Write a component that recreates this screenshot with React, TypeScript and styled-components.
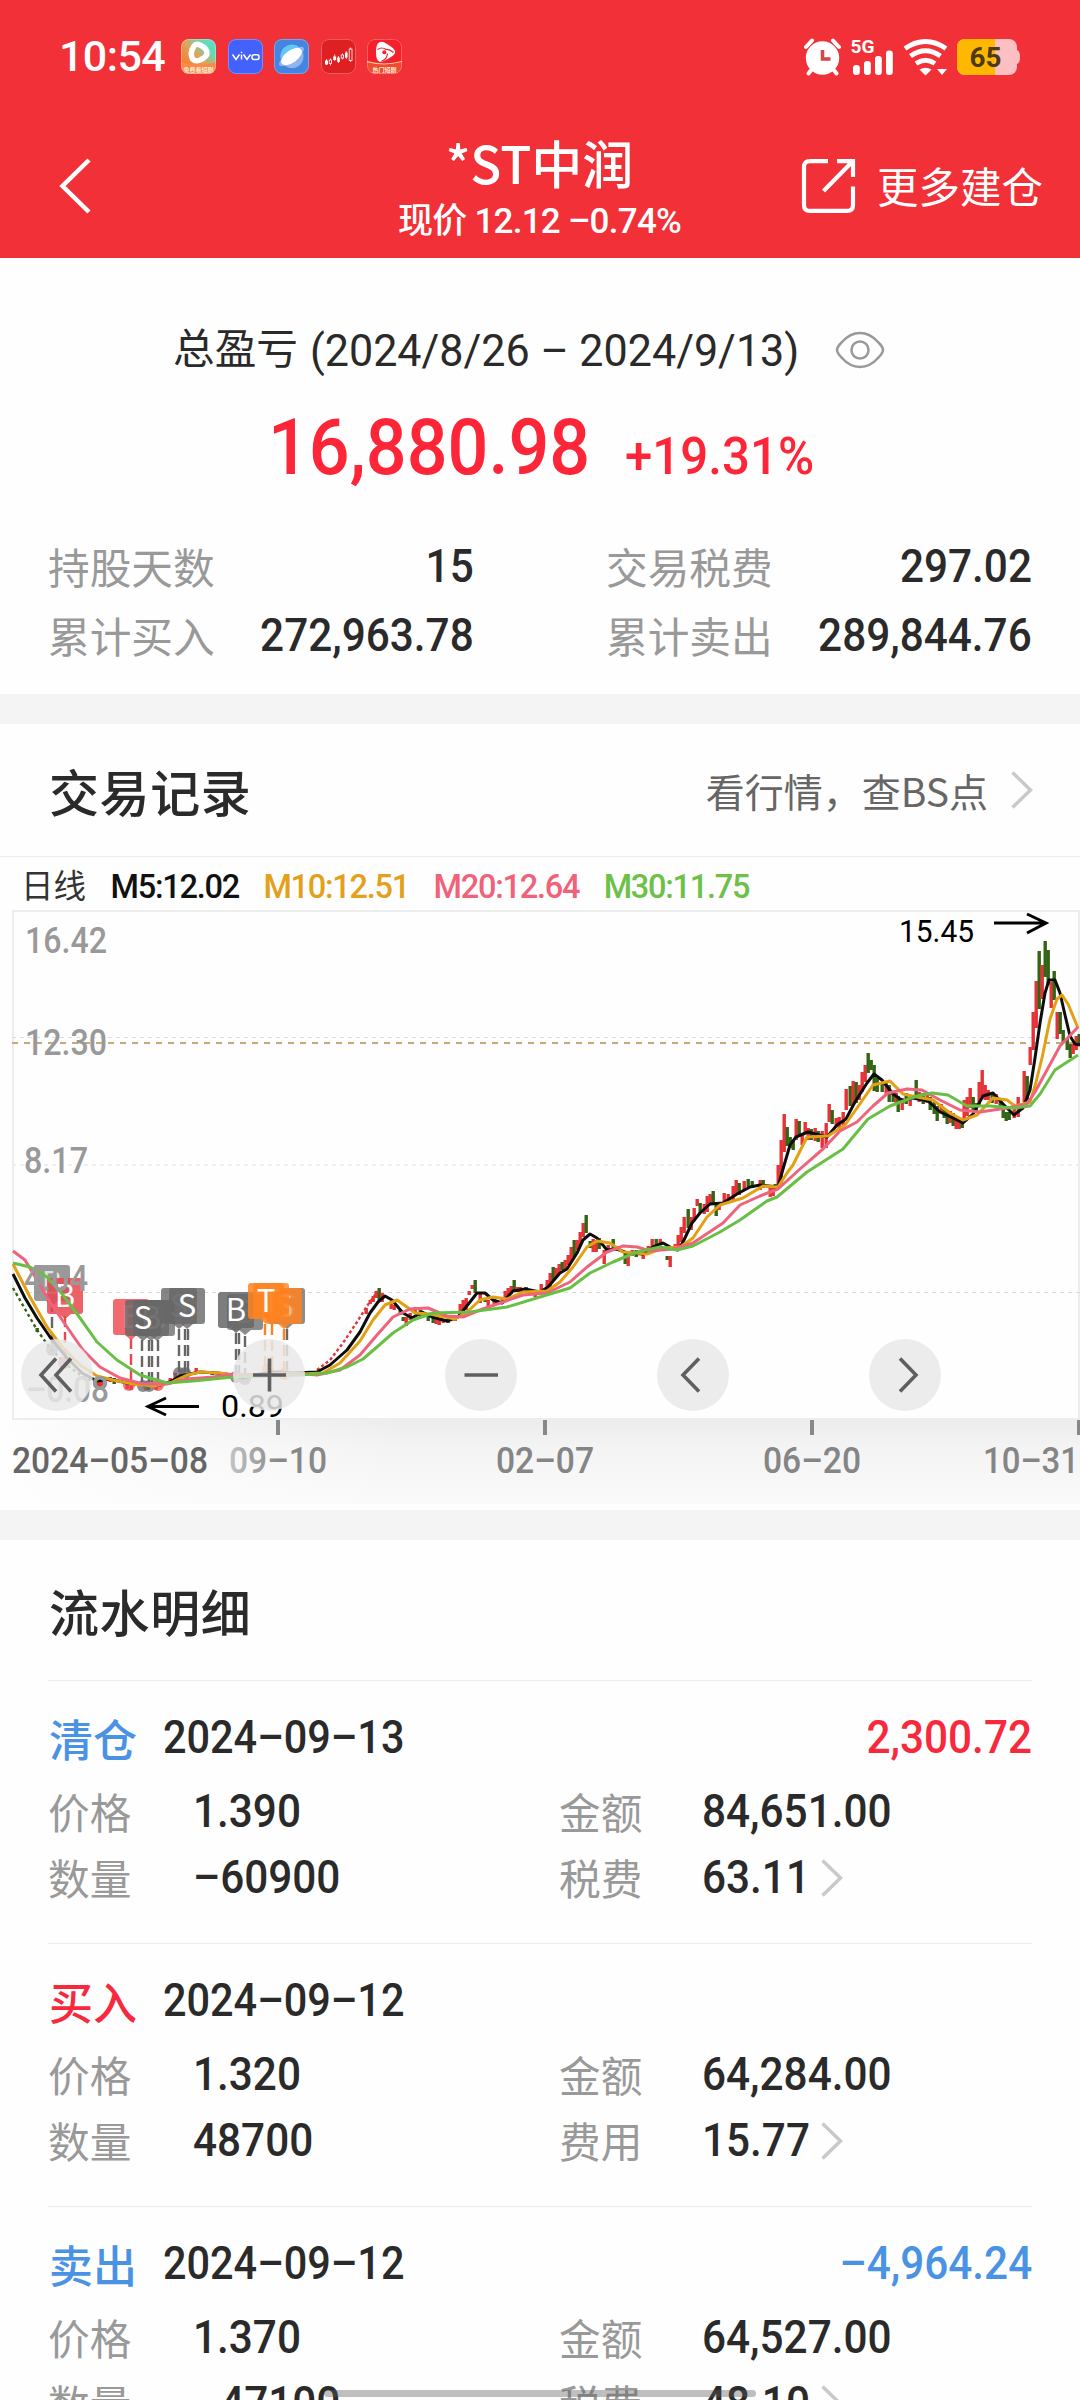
import React from 'react';
import styled, { createGlobalStyle } from 'styled-components';

const CJK = '"Noto Sans CJK SC", sans-serif';
const MIXED = 'Roboto, "Noto Sans CJK SC", sans-serif';

const GlobalStyle = createGlobalStyle`
  * { box-sizing: border-box; }
  body { margin: 0; background: #fefefe; font-family: ${CJK}; }
`;

const Screen = styled.div`
  position: relative;
  width: 1080px;
  height: 2400px;
  overflow: hidden;
  background: #fefefe;
  color: #2a2a2a;
`;

/* ---------- header ---------- */

const Header = styled.header`
  height: 258px;
  background: #f23037;
  color: #fff;
`;

const StatusBar = styled.div`
  display: flex;
  align-items: center;
  height: 113px;
  padding: 0 60px 0 59px;
`;

const Clock = styled.span`
  width: 122px;
  font: 500 43px/1 Roboto, sans-serif;
  letter-spacing: -0.6px;
`;

const AppIcons = styled.div`
  display: flex;
  flex: 1;
  gap: 11.5px;
  svg { display: block; }
`;

const SystemIcons = styled.div`
  display: flex;
  align-items: center;
  svg { display: block; }
`;

const NavBar = styled.nav`
  display: grid;
  grid-template-columns: 1fr auto 1fr;
  height: 145px;
  padding: 0 37px 0 58px;
`;

const BackButton = styled.button`
  justify-self: start;
  align-self: center;
  padding: 0;
  border: 0;
  background: none;
  svg { display: block; }
`;

const TitleBlock = styled.div`
  display: flex;
  flex-direction: column;
  align-items: center;
  padding: 19px 22px 0 0;
`;

const Title = styled.h1`
  margin: 0;
  font: 500 51px/60px ${CJK};
  white-space: nowrap;
`;

const Quote = styled.div`
  margin-top: 4px;
  font: 500 35px/51px ${MIXED};
  letter-spacing: -0.75px;
  white-space: nowrap;
`;

const MoreAction = styled.div`
  display: flex;
  align-items: center;
  justify-self: end;
  gap: 21px;
  font: 400 41.5px/1 ${CJK};
  white-space: nowrap;
`;

/* ---------- shared ---------- */

const Num = styled.span<{ $size?: number; $weight?: number; $origin?: string; $squeeze?: number; $color?: string }>`
  display: inline-block;
  font: ${p => p.$weight ?? 500} ${p => p.$size ?? 45.5}px/1 Roboto, sans-serif;
  color: ${p => p.$color ?? 'inherit'};
  transform: scaleX(${p => p.$squeeze ?? 0.93});
  transform-origin: ${p => p.$origin ?? 'left'} center;
  white-space: nowrap;
`;

const Label = styled.span`
  font: 400 41.7px/1 ${CJK};
  color: #999;
  white-space: nowrap;
`;

const Band = styled.div`
  height: 30px;
  background: #f4f4f4;
`;

const SectionTitle = styled.h2`
  margin: 0;
  font: 500 50px/1 ${CJK};
  letter-spacing: 0.6px;
`;

/* ---------- summary ---------- */

const Summary = styled.section`
  height: 436px;
  padding: 62px 48px 0;
`;

const Period = styled.div`
  display: flex;
  align-items: center;
  height: 60px;
  padding-left: 125px;
`;

const PeriodName = styled.span`
  font: 400 41.7px/60px ${MIXED};
  margin-right: 12px;
`;

const EyeIcon = styled.svg`
  display: block;
  margin-left: 14px;
`;

const Profit = styled.div`
  display: flex;
  align-items: baseline;
  margin-top: 29px;
  padding-left: 220px;
  color: #fd2639;
`;

const ProfitTotal = styled.div`
  width: 357px;
`;

const Stats = styled.div`
  display: grid;
  grid-template-columns: 426px 426px;
  column-gap: 132px;
  grid-auto-rows: 69px;
  margin-top: 45px;
`;

const Stat = styled.div`
  display: flex;
  align-items: center;
  justify-content: space-between;
`;

/* ---------- trading chart ---------- */

const ChartHeader = styled.div`
  display: flex;
  align-items: center;
  justify-content: space-between;
  height: 133px;
  padding: 0 47px 0 49px;
  border-bottom: 1px solid #ebebeb;
`;

const QuoteLink = styled.div`
  display: flex;
  align-items: center;
  gap: 23px;
  font: 400 39px/1 ${CJK};
  color: #666;
`;

const Legend = styled.div`
  display: flex;
  align-items: center;
  gap: 24.5px;
  height: 53px;
  padding: 8px 0 0 21px;
`;

const LegendItem = styled.span<{ $color: string; $weight?: number }>`
  font: ${p => p.$weight ?? 500} 32.5px/1 ${MIXED};
  letter-spacing: ${p => (p.$weight ? '0' : '-1.25px')};
  color: ${p => p.$color};
`;

const ChartArea = styled.div`
  position: relative;
  height: 600px;
  svg { display: block; }
`;

const ChartControls = styled.div`
  position: absolute;
  left: 21px;
  top: 429px;
  display: flex;
  gap: 140px;
`;

const RoundButton = styled.button`
  display: block;
  width: 72px;
  height: 72px;
  padding: 0;
  border: 0;
  border-radius: 50%;
  background: rgba(232, 232, 232, 0.84);
`;

/* ---------- records ---------- */

const Records = styled.section`
  padding: 0 48px;
`;

const RecordsTitle = styled.div`
  display: flex;
  align-items: center;
  height: 140px;
  padding-left: 1px;
`;

const Record = styled.article`
  height: 263px;
  padding-top: 27px;
  border-top: 1px solid #ebebeb;
`;

const RecordHead = styled.div`
  display: flex;
  align-items: center;
  height: 60px;
  margin-bottom: 11px;
`;

const Kind = styled.span<{ $color: string }>`
  width: 115px;
  padding-left: 1px;
  font: 500 44px/1 ${CJK};
  color: ${p => p.$color};
`;

const Result = styled.span`
  margin-left: auto;
`;

const RecordGrid = styled.div`
  display: grid;
  grid-template-columns: 145px 366px 143px 1fr;
  grid-auto-rows: 66px;
  align-items: center;
`;

const Fee = styled.span`
  display: flex;
  align-items: center;
  gap: 3px;
`;

const HomeIndicator = styled.div`
  position: absolute;
  left: 324px;
  top: 2390px;
  width: 432px;
  height: 7px;
  border-radius: 4px;
  background: rgba(90, 90, 90, 0.38);
`;

/* ---------- small icons ---------- */

const Chevron = () => (
  <svg width="22" height="38" viewBox="0 0 22 38">
    <path d="M1.5 1.5 19.5 19 1.5 36.5" fill="none" stroke="#c9c9c9" strokeWidth="3.500" />
  </svg>
);

const AppTile = ({ fill, children }: { fill: string; children: React.ReactNode }) => (
  <svg width="35" height="35" viewBox="0 0 35 35">
    <defs>
      <linearGradient id="tileWarm" x1="0" y1="1" x2="1" y2="0">
        <stop offset="0" stopColor="#ff6a1c" />
        <stop offset="0.5" stopColor="#e0a25a" />
        <stop offset="0.75" stopColor="#62dcb6" />
        <stop offset="1" stopColor="#58e0c8" />
      </linearGradient>
      <clipPath id="tileClip"><rect width="35" height="35" rx="8" /></clipPath>
    </defs>
    <g clipPath="url(#tileClip)">
      <rect width="35" height="35" fill={fill} />
      {children}
    </g>
    <rect x="0.5" y="0.5" width="34" height="34" rx="7.5" fill="none" stroke="#fff" strokeOpacity="0.28" />
  </svg>
);

const TileText = ({ children }: { children: string }) => (
  <text x="17.5" y="33" fontSize="6" fontWeight="700" fill="#ffe9d8" textAnchor="middle" fontFamily={CJK}>{children}</text>
);

const StatusApps = () => (
  <AppIcons>
    <AppTile fill="url(#tileWarm)">
      <path d="M0 23Q17 28 35 23V35H0Z" fill="#f98a48" />
      <path d="M13 7Q15 4 20 6.500Q26 9.500 26 14Q26 18 19 21Q14 23 11.500 20Q8.500 14 13 7Z" fill="none" stroke="#fff" strokeWidth="5.500" strokeLinejoin="round" />
      <TileText>免费看短剧</TileText>
    </AppTile>
    <AppTile fill="#4362fb">
      <g fill="none" stroke="#fff" strokeWidth="1.500">
        <path d="M4.500 15.500 8 20.500 11.500 15.500M13.500 15.500V20.500M15.500 15.500 19 20.500 22.500 15.500M13.500 12.800V14" />
        <rect x="24" y="15.800" width="7" height="4.600" rx="2" />
      </g>
    </AppTile>
    <AppTile fill="#4584e0">
      <circle cx="18" cy="17.500" r="11.500" fill="#8fb5ee" />
      <path d="M6.500 17.500A11.500 11.500 0 0 1 26 9L8 23Z" fill="#5fc8f5" />
      <ellipse cx="17.500" cy="17.500" rx="15" ry="5" transform="rotate(-36 17.500 17.500)" fill="#8fb5ee" />
      <ellipse cx="17.500" cy="17.500" rx="12" ry="6.200" transform="rotate(-36 17.500 17.500)" fill="#fff" />
    </AppTile>
    <AppTile fill="#df1f22">
      <g fill="#fff">
        <rect x="4" y="21.500" width="3" height="4" /><rect x="12.200" y="17.500" width="3" height="3.500" />
        <rect x="16.200" y="18.500" width="2.600" height="4.500" /><rect x="24" y="13.500" width="2.600" height="5" />
      </g>
      <g fill="none" stroke="#fff" strokeWidth="0.800">
        <rect x="8.200" y="21" width="2.400" height="3.500" /><rect x="20.200" y="16" width="2.400" height="3" />
        <rect x="28.200" y="10" width="2.800" height="11.500" />
        <path d="M5.500 20V26M9.500 19.500V21M9.500 24.500V26.500M13.700 15.500V22M17.500 17V24M21.400 14.500V16M21.400 19V20.500M25.300 12V20M29.600 8.500V10M29.600 21.500V23" />
      </g>
    </AppTile>
    <AppTile fill="#f5202b">
      <path d="M0 23Q17 28 35 23V35H0Z" fill="#ee4a2c" />
      <path d="M0 22.500Q17 27.500 35 22.500" fill="none" stroke="#ffc9a0" strokeWidth="1.200" />
      <path d="M12 3.500Q15 1.500 20 5Q27 9 28 12Q29 15 24 18Q15 24 12 22.500Q9 21 9 13Q9 5.500 12 3.500Z" fill="#fff" />
      <path d="M10.500 10.500Q15 7.500 19 10.500M26.500 13.500Q22 9.500 18 10.500M14.500 22Q20 20.500 20.500 14.500" fill="none" stroke="#f5202b" strokeWidth="1.200" />
      <circle cx="17.300" cy="13.300" r="2" fill="#f5202b" />
      <TileText>热门短剧</TileText>
    </AppTile>
  </AppIcons>
);

const StatusSystem = () => (
  <SystemIcons>
    <svg width="216" height="38" viewBox="804 38 216 38">
      <g fill="#fff">
        <circle cx="822.500" cy="58" r="16.700" />
        <path d="M806 47 812 40.500M839 47 833 40.500M812 69 808.500 73.500M833 69 836.500 73.500" stroke="#fff" strokeWidth="4" strokeLinecap="round" />
        <path d="M822.500 50V59H830.500" fill="none" stroke="#d7444a" strokeWidth="3.500" />
        <text x="850.500" y="52.500" fontSize="17.500" fontWeight="700" fontFamily="Roboto, sans-serif" textLength="24" lengthAdjust="spacingAndGlyphs">5G</text>
        <rect x="853" y="65" width="6.800" height="10" rx="3" />
        <rect x="864" y="61" width="6.800" height="14" rx="3" />
        <rect x="875" y="56" width="6.800" height="19" rx="3" />
        <rect x="886" y="50.500" width="6.800" height="24.500" rx="3" />
      </g>
      <g fill="none" stroke="#fff" strokeWidth="4.800">
        <path d="M905 48.500Q925.500 34.500 946 48.500" />
        <path d="M910.500 56Q925.500 45.500 940.500 56" />
        <path d="M916 63.500Q925.500 57 935 63.500" />
      </g>
      <path d="M919.500 69.500Q925.500 66 931.500 69.500L925.500 75.500ZM937 69H947L942 75Z" fill="#fff" />
      <rect x="957" y="39" width="60" height="36" rx="8" fill="#fcbfc2" />
      <path d="M1017 50Q1020 51 1020 57Q1020 63 1017 64Z" fill="#fcbfc2" />
      <path d="M965 39H995V75H965A8 8 0 0 1 957 67V47A8 8 0 0 1 965 39Z" fill="#ffb800" />
      <text x="969.500" y="67" fontSize="28" fontWeight="700" fill="#4d3a13" fontFamily="Roboto, sans-serif" textLength="32" lengthAdjust="spacingAndGlyphs">65</text>
    </svg>
  </SystemIcons>
);

/* ---------- chart data ---------- */

const MA5 = '13,1274 25,1298 37,1318 50,1337 67,1358 82,1373 97,1381 110,1379 127,1383 147,1385 160,1385 170,1382 180,1376 200,1372 217,1373 233,1375 243,1378 260,1374 277,1372 293,1373 317,1372 330,1365 347,1350 360,1332 370,1313 378,1302 385,1296 392,1300 403,1313 412,1318 422,1312 432,1317 447,1321 458,1317 470,1302 477,1293 485,1293 493,1300 502,1303 513,1291 525,1289 540,1292 548,1287 560,1273 567,1269 577,1253 583,1240 590,1234 597,1238 607,1250 617,1249 627,1253 643,1254 653,1247 663,1243 672,1248 678,1250 683,1242 692,1223 700,1213 710,1204 723,1203 737,1194 750,1187 760,1185 778,1187 783,1169 790,1145 796,1137 808,1132 827,1137 837,1125 846,1119 855,1102 867,1083 874,1074 882,1080 893,1094 903,1101 913,1098 928,1101 940,1112 953,1118 963,1123 973,1114 983,1096 993,1093 1003,1104 1014,1115 1023,1108 1030,1090 1035,1058 1040,1023 1045,993 1049,980 1055,980 1060,993 1065,1015 1070,1036 1075,1044 1080,1045';
const MA10 = '13,1264 30,1297 47,1327 63,1348 80,1365 97,1376 113,1380 133,1384 153,1386 170,1383 187,1375 200,1372 220,1373 240,1376 260,1375 283,1373 303,1374 323,1373 340,1363 360,1341 373,1320 385,1305 397,1300 407,1307 415,1313 430,1314 455,1319 467,1312 480,1300 493,1297 507,1299 523,1292 547,1291 560,1282 573,1267 587,1247 597,1241 610,1243 623,1252 647,1254 663,1248 680,1247 693,1238 707,1217 720,1205 743,1198 763,1186 778,1187 787,1173 793,1165 807,1137 828,1136 845,1125 857,1108 873,1085 890,1081 903,1094 917,1097 933,1100 950,1113 963,1120 977,1115 993,1098 1007,1100 1015,1106 1030,1102 1035,1086 1042,1058 1050,1019 1057,999 1062,995 1068,1004 1078,1028';
const MA20 = '13,1251 25,1260 37,1280 50,1302 67,1327 83,1350 100,1367 120,1378 143,1384 167,1384 187,1379 213,1377 233,1374 267,1375 293,1373 317,1375 340,1370 360,1355 377,1335 393,1317 410,1309 428,1308 447,1316 463,1317 480,1310 503,1302 523,1295 547,1293 570,1282 587,1267 607,1252 623,1246 637,1247 650,1251 673,1249 693,1243 723,1223 740,1205 760,1196 778,1189 800,1169 823,1149 840,1131 857,1122 873,1106 888,1093 907,1089 922,1090 940,1100 960,1110 980,1112 1007,1108 1027,1104 1035,1092 1047,1070 1060,1046 1078,1027';
const MA30 = '13,1263 30,1267 47,1277 63,1295 80,1318 97,1342 117,1360 140,1375 167,1383 193,1381 233,1377 267,1376 300,1375 327,1373 347,1367 363,1359 377,1347 393,1333 413,1320 433,1313 470,1312 507,1307 540,1297 570,1288 590,1273 613,1262 637,1252 660,1247 677,1250 693,1246 720,1232 740,1220 767,1201 777,1197 807,1172 843,1149 868,1119 890,1106 917,1096 932,1093 948,1095 967,1106 990,1106 1013,1108 1030,1106 1040,1094 1055,1070 1078,1055';

/* each entry: x, high, low, direction */
const CANDLES =
  '37 1328 1332 g,110 1377 1382 r,114 1378 1384 g,127 1382 1389 r,131 1382 1390 r,148 1383 1390 g,156 1383 1390 r,170 1378 1384 r,175 1373 1380 r,196 1368 1373 r,212 1371 1375 g,266 1371 1376 r,272 1369 1374 g,' +
  '366 1308 1314 r,370 1300 1304 r,373 1296 1302 r,376 1291 1298 r,379 1288 1300 g,382 1293 1302 r,391 1304 1309 r,394 1305 1310 r,400 1310 1315 g,403 1317 1321 g,406 1317 1326 r,410 1313 1320 r,415 1307 1312 r,420 1310 1318 g,428 1314 1321 g,433 1316 1323 g,436 1319 1324 r,439 1320 1325 r,443 1319 1323 r,448 1318 1323 g,455 1315 1321 r,460 1304 1318 r,463 1300 1314 r,466 1298 1310 r,469 1291 1295 r,472 1285 1289 r,475 1280 1293 g,480 1294 1303 r,485 1298 1302 g,488 1300 1306 r,494 1299 1304 r,497 1300 1304 g,502 1298 1304 r,505 1291 1300 r,508 1288 1296 r,511 1286 1294 r,514 1280 1292 g,517 1287 1292 r,520 1287 1292 r,526 1287 1291 g,530 1290 1294 g,535 1290 1297 r,541 1284 1292 r,547 1280 1290 r,550 1273 1288 r,553 1267 1280 g,556 1268 1278 r,559 1264 1274 r,562 1262 1270 g,565 1260 1270 r,568 1255 1265 r,571 1247 1261 r,574 1240 1257 g,577 1240 1250 r,580 1232 1245 r,583 1223 1237 r,586 1215 1233 g,590 1241 1248 g,593 1239 1252 r,596 1240 1252 r,599 1238 1249 g,604 1250 1264 r,608 1245 1252 r,613 1239 1248 g,618 1246 1251 r,625 1252 1264 g,628 1253 1266 r,632 1250 1256 r,636 1250 1257 g,643 1250 1259 r,648 1246 1253 r,652 1239 1248 r,656 1239 1245 g,660 1239 1245 r,667 1256 1260 g,670 1256 1267 r,675 1244 1250 r,678 1235 1248 r,681 1227 1242 r,684 1217 1233 r,688 1209 1228 g,691 1217 1230 r,694 1208 1221 r,697 1199 1206 r,700 1203 1213 g,704 1204 1214 r,707 1196 1212 r,710 1194 1205 r,713 1191 1205 g,716 1205 1216 g,719 1202 1210 r,724 1193 1203 r,728 1194 1203 r,733 1186 1202 r,736 1180 1193 r,739 1183 1195 g,744 1181 1190 r,748 1179 1187 g,752 1181 1188 g,760 1180 1190 r,763 1180 1188 g,770 1187 1197 r,773 1187 1196 r,775 1184 1190 g,' +
  '778 1165 1184 r,781 1140 1184 r,784 1114 1152 r,787 1127 1146 g,790 1137 1148 g,793 1140 1150 g,796 1119 1140 r,799 1121 1136 g,802 1133 1145 r,805 1122 1134 r,808 1128 1140 r,811 1129 1140 g,815 1128 1141 r,818 1131 1142 g,822 1131 1148 r,826 1123 1148 r,829 1104 1122 r,832 1110 1124 g,836 1118 1126 r,839 1117 1130 r,843 1112 1125 r,846 1089 1110 r,850 1086 1106 g,853 1081 1105 r,856 1082 1103 g,859 1085 1100 r,862 1072 1092 r,865 1065 1082 r,868 1053 1073 g,871 1060 1070 g,874 1065 1091 g,877 1078 1092 g,882 1082 1092 g,886 1081 1095 r,889 1085 1102 g,893 1092 1102 g,896 1093 1104 r,898 1096 1112 g,902 1098 1110 r,906 1093 1104 g,910 1096 1106 r,916 1080 1096 g,919 1092 1102 r,923 1093 1104 g,927 1095 1103 r,930 1097 1110 g,934 1102 1114 g,937 1106 1121 g,941 1104 1113 r,944 1110 1118 g,947 1112 1124 g,950 1111 1123 r,953 1113 1126 g,956 1116 1129 r,959 1118 1129 r,962 1118 1128 g,964 1100 1120 r,967 1097 1116 r,970 1088 1108 r,973 1097 1110 g,976 1103 1112 g,979 1082 1106 r,982 1070 1096 r,985 1085 1100 r,988 1090 1100 r,992 1093 1103 g,996 1094 1104 r,1000 1098 1109 g,1003 1107 1118 g,1006 1112 1121 g,1009 1112 1120 g,1014 1105 1118 r,1018 1097 1117 r,1024 1071 1102 r,1027 1076 1100 g,1030 1047 1065 r,1033 1012 1050 r,1036 981 1028 r,1039 951 1009 g,1042 965 999 r,1045 941 977 g,1048 950 985 g,1051 982 1008 r,1054 971 1000 g,1057 1012 1039 r,1060 1012 1034 g,1063 1030 1042 g,1067 1038 1050 g,1070 1044 1058 g,1073 1044 1054 r,1076 1036 1050 r,1079 1034 1045 g';

const candles = CANDLES.split(',').map(row => {
  const [x, high, low, dir] = row.split(' ');
  return { x: +x, high: +high, low: +low, color: dir === 'r' ? '#e53237' : '#326414' };
});

const GREY = '#666';
const RED = '#e8474d';
const ORANGE = '#ff8220';

const markers = [
  { x: 52, y: 1265, text: 'B', color: '#777', opacity: 0.75, ink: 0.7 },
  { x: 65, y: 1278, text: 'B', color: RED, opacity: 0.85, ink: 1 },
  { x: 131, y: 1299, text: 'E', color: '#f0555b', opacity: 0.88, ink: 0.4 },
  { x: 157, y: 1300, text: 'B', color: GREY, opacity: 0.75, ink: 0.35 },
  { x: 151, y: 1300, text: 'B', color: GREY, opacity: 0.75, ink: 0.35 },
  { x: 143, y: 1300, text: 'S', color: GREY, opacity: 0.8, ink: 1 },
  { x: 179, y: 1288, text: 'S', color: GREY, opacity: 0.8, ink: 0.25 },
  { x: 187, y: 1288, text: 'S', color: GREY, opacity: 0.8, ink: 1 },
  { x: 245, y: 1294, text: 'B', color: GREY, opacity: 0.75, ink: 0.35 },
  { x: 236, y: 1292, text: 'B', color: GREY, opacity: 0.85, ink: 1 },
  { x: 287, y: 1288, text: 'S', color: GREY, opacity: 0.75, ink: 0.3 },
  { x: 284, y: 1288, text: 'S', color: ORANGE, opacity: 0.85, ink: 0.45 },
  { x: 271, y: 1283, text: 'T', color: ORANGE, opacity: 0.8, ink: 0.4 },
  { x: 266, y: 1283, text: 'T', color: ORANGE, opacity: 0.85, ink: 1 },
];

const stems: [number, number, number, string][] = [
  [52, 1301, 1350, GREY], [65, 1316, 1362, RED], [131, 1338, 1380, RED],
  [142, 1340, 1382, GREY], [149, 1340, 1382, GREY], [152, 1340, 1382, GREY], [158, 1340, 1382, GREY],
  [179, 1329, 1372, GREY], [185, 1329, 1372, GREY], [188, 1329, 1372, GREY],
  [236, 1333, 1378, GREY], [239, 1333, 1378, GREY], [245, 1336, 1378, GREY],
  [265, 1324, 1368, ORANGE], [272, 1324, 1368, ORANGE], [284, 1329, 1372, ORANGE], [287, 1329, 1372, GREY],
];

const points: [number, number, string][] = [
  [52, 1350, GREY], [64, 1363, RED], [129, 1385, RED], [143, 1386, GREY], [149, 1386, GREY], [158, 1385, RED],
  [179, 1373, GREY], [185, 1373, GREY], [236, 1377, GREY], [245, 1379, GREY], [268, 1369, ORANGE], [284, 1374, ORANGE],
];

const ChartText = ({ x, y, w, size = 36, color = '#999', weight = 500, children }:
  { x: number; y: number; w: number; size?: number; color?: string; weight?: number; children: string }) => (
  <text x={x} y={y} textLength={w} lengthAdjust="spacingAndGlyphs" fontSize={size} fontWeight={weight} fill={color} fontFamily="Roboto, sans-serif">
    {children}
  </text>
);

const Chart = () => (
  <svg width="1080" height="600" viewBox="0 910 1080 600">
    <defs>
      <linearGradient id="shade" x1="0" y1="0" x2="0" y2="1">
        <stop offset="0" stopColor="#ececec" />
        <stop offset="0.35" stopColor="#f4f4f4" />
        <stop offset="1" stopColor="#fafafa" />
      </linearGradient>
      <linearGradient id="fade" x1="0" y1="0" x2="1" y2="0">
        <stop offset="0" stopColor="#fefefe" />
        <stop offset="0.4" stopColor="#fefefe" stopOpacity="0.6" />
        <stop offset="1" stopColor="#fefefe" stopOpacity="0" />
      </linearGradient>
      <linearGradient id="dateInk" x1="0" y1="0" x2="1" y2="0">
        <stop offset="0" stopColor="#c4c4c4" />
        <stop offset="0.5" stopColor="#888" />
      </linearGradient>
    </defs>

    <rect x="0" y="1418" width="1080" height="86" fill="url(#shade)" />
    <rect x="0" y="1418" width="400" height="86" fill="url(#fade)" />

    <g fill="none">
      <rect x="13" y="911" width="1066" height="508" stroke="#ededed" strokeWidth="2" />
      <path d="M12 1037.500H1080" stroke="#dcdcdc" strokeDasharray="4 4" />
      <path d="M12 1165H1080" stroke="#eee" strokeWidth="2" strokeDasharray="4 4" />
      <path d="M12 1292.500H1080" stroke="#d9d9d9" strokeDasharray="4 4" />
      <path d="M12 1043H1080" stroke="#c9a878" strokeWidth="2" strokeDasharray="6 6" />
    </g>

    {candles.map((c, i) => <rect key={i} x={c.x - 1.5} y={c.high} width="3.400" height={c.low - c.high} fill={c.color} />)}

    <g fill="none" strokeWidth="2.400">
      <path d="M13 1288 37 1330 50 1348 67 1365 83 1377 97 1383" stroke="#326414" strokeDasharray="3 3" />
      <path d="M317 1370 330 1360 343 1343 357 1322 367 1306 378 1291" stroke="#e53237" strokeDasharray="3 2.500" />
    </g>

    {stems.map(([x, y1, y2, color], i) => <path key={i} d={`M${x} ${y1}V${y2}`} stroke={color} strokeWidth="2.400" strokeDasharray="11 5" />)}
    {points.map(([x, y, color], i) => <circle key={i} cx={x} cy={y} r="6" fill={color} opacity="0.75" />)}
    <circle cx="100" cy="1383" r="5.500" fill="#d33" stroke="#666" strokeWidth="3" />

    {markers.map((m, i) => (
      <g key={i}>
        <path d={`M${m.x - 15} ${m.y}h30q3 0 3 3v30q0 3 -3 3h-9l-6 5l-6 -5h-9q-3 0 -3 -3v-30q0 -3 3 -3z`} fill={m.color} opacity={m.opacity} />
        <text x={m.x} y={m.y + 29} textAnchor="middle" fontSize="31" fontFamily={CJK} fill="#fff" opacity={m.ink}>{m.text}</text>
      </g>
    ))}

    <g fill="none" strokeWidth="3" strokeLinejoin="round">
      <polyline points={MA5} stroke="#0d0d0d" />
      <polyline points={MA10} stroke="#e2a012" />
      <polyline points={MA20} stroke="#ee647c" />
      <polyline points={MA30} stroke="#69bf45" />
    </g>

    <ChartText x={25} y={953} w={82}>16.42</ChartText>
    <ChartText x={25} y={1055} w={82}>12.30</ChartText>
    <ChartText x={24} y={1173} w={64}>8.17</ChartText>
    <ChartText x={24} y={1291} w={64}>4.04</ChartText>
    <ChartText x={26} y={1402} w={83}>–0.08</ChartText>

    <ChartText x={899} y={942} w={75} size={31} weight={400} color="#000">15.45</ChartText>
    <ChartText x={221} y={1417} w={63} size={31} weight={400} color="#000">0.89</ChartText>
    <g fill="none" stroke="#000" strokeWidth="3">
      <path d="M994 923H1045M1027 914 1046 923 1027 933" />
      <path d="M199 1406.500H149M166 1398 148 1406.500 166 1415" />
    </g>

    <g fill="#888">
      <rect x="276" y="1420" width="4" height="15" />
      <rect x="543" y="1420" width="4" height="15" />
      <rect x="810" y="1420" width="4" height="15" />
      <rect x="1077" y="1420" width="3" height="15" />
    </g>
    <ChartText x={12} y={1473} w={196} color="#666">2024–05–08</ChartText>
    <ChartText x={229} y={1473} w={98} color="url(#dateInk)">09–10</ChartText>
    <ChartText x={496} y={1473} w={98} color="#858585">02–07</ChartText>
    <ChartText x={763} y={1473} w={98} color="#858585">06–20</ChartText>
    <ChartText x={983} y={1473} w={96} color="#858585">10–31</ChartText>
  </svg>
);

const CONTROL_PATHS = [
  'M35 19.500 20 36 35 52.500M50 19.500 35 36 50 52.500',
  'M20 36H53M36.500 19.500V52.500',
  'M19.500 36H53',
  'M42 19.500 26 36 42 52.500',
  'M31 19.500 47 36 31 52.500',
];

/* ---------- page data ---------- */

const stats = [
  ['持股天数', '15'],
  ['交易税费', '297.02'],
  ['累计买入', '272,963.78'],
  ['累计卖出', '289,844.76'],
];

const RISE = '#f62a3c';
const FALL = '#4a92e4';

const records = [
  { kind: '清仓', color: FALL, date: '2024–09–13', result: '2,300.72', resultColor: RISE, price: '1.390', amount: '84,651.00', count: '–60900', feeName: '税费', fee: '63.11' },
  { kind: '买入', color: RISE, date: '2024–09–12', result: '', resultColor: RISE, price: '1.320', amount: '64,284.00', count: '48700', feeName: '费用', fee: '15.77' },
  { kind: '卖出', color: FALL, date: '2024–09–12', result: '–4,964.24', resultColor: FALL, price: '1.370', amount: '64,527.00', count: '–47100', feeName: '税费', fee: '48.10' },
];

export default function App() {
  return (
    <Screen>
      <GlobalStyle />
      <Header>
        <StatusBar>
          <Clock>10:54</Clock>
          <StatusApps />
          <StatusSystem />
        </StatusBar>
        <NavBar>
          <BackButton>
            <svg width="34" height="58" viewBox="0 0 34 58">
              <path d="M31 3 4.500 29 31 55" fill="none" stroke="#fff" strokeWidth="4.500" />
            </svg>
          </BackButton>
          <TitleBlock>
            <Title>*ST中润</Title>
            <Quote>现价 12.12 –0.74%</Quote>
          </TitleBlock>
          <MoreAction>
            <svg width="55" height="56" viewBox="0 0 55 56">
              <g fill="none" stroke="#fff" strokeWidth="4.200">
                <path d="M27 3.100H9Q3 3.100 3 9.100V46.900Q3 52.900 9 52.900H46Q52 52.900 52 46.900V28.500" />
                <path d="M36 3.100H52V19M51 4 22.500 33" />
              </g>
            </svg>
            更多建仓
          </MoreAction>
        </NavBar>
      </Header>

      <Summary>
        <Period>
          <PeriodName>总盈亏</PeriodName>
          <Num $weight={400} $size={45} $squeeze={0.957}>(2024/8/26 – 2024/9/13)</Num>
          <EyeIcon width="50" height="38" viewBox="0 0 50 38" fill="none" stroke="#999" strokeWidth="2.500">
            <path d="M2 19Q2 16 7 11Q15 2 25 2T43 11Q48 16 48 19T43 27Q35 36 25 36T7 27Q2 22 2 19Z" />
            <circle cx="25" cy="19" r="8.500" />
          </EyeIcon>
        </Period>
        <Profit>
          <ProfitTotal><Num $size={78} $squeeze={0.922}>16,880.98</Num></ProfitTotal>
          <Num $size={51} $squeeze={0.965}>+19.31%</Num>
        </Profit>
        <Stats>
          {stats.map(([name, value]) => (
            <Stat key={name}>
              <Label>{name}</Label>
              <Num $origin="right">{value}</Num>
            </Stat>
          ))}
        </Stats>
      </Summary>

      <Band />

      <section>
        <ChartHeader>
          <SectionTitle>交易记录</SectionTitle>
          <QuoteLink>
            看行情，查BS点
            <Chevron />
          </QuoteLink>
        </ChartHeader>
        <Legend>
          <LegendItem $color="#333" $weight={400}>日线</LegendItem>
          <LegendItem $color="#111">M5:12.02</LegendItem>
          <LegendItem $color="#e3a01a">M10:12.51</LegendItem>
          <LegendItem $color="#f0627a">M20:12.64</LegendItem>
          <LegendItem $color="#6cc146">M30:11.75</LegendItem>
        </Legend>
        <ChartArea>
          <Chart />
          <ChartControls>
            {CONTROL_PATHS.map(d => (
              <RoundButton key={d}>
                <svg width="72" height="72" viewBox="0 0 72 72">
                  <path d={d} fill="none" stroke="#5f5f5f" strokeWidth="3.600" />
                </svg>
              </RoundButton>
            ))}
          </ChartControls>
        </ChartArea>
      </section>

      <Band />

      <Records>
        <RecordsTitle><SectionTitle>流水明细</SectionTitle></RecordsTitle>
        {records.map((r, i) => (
          <Record key={i}>
            <RecordHead>
              <Kind $color={r.color}>{r.kind}</Kind>
              <Num $squeeze={0.91}>{r.date}</Num>
              <Result><Num $origin="right" $color={r.resultColor}>{r.result}</Num></Result>
            </RecordHead>
            <RecordGrid>
              <Label>价格</Label>
              <Num>{r.price}</Num>
              <Label>金额</Label>
              <Num>{r.amount}</Num>
              <Label>数量</Label>
              <Num>{r.count}</Num>
              <Label>{r.feeName}</Label>
              <Fee><Num>{r.fee}</Num><Chevron /></Fee>
            </RecordGrid>
          </Record>
        ))}
      </Records>
      <HomeIndicator />
    </Screen>
  );
}
